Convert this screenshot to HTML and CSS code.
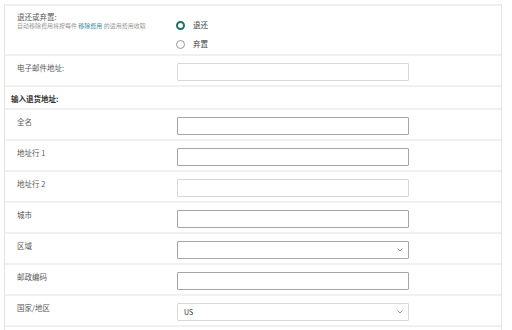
FILE: index.html
```html
<!DOCTYPE html>
<html lang="zh-CN">
<head>
  <meta charset="UTF-8" />
  <title>退货设置</title>
  <link rel="stylesheet" href="styles.css">
</head>
<body>
  <div class="form-table">
    <!-- 退还或弃置 -->
    <div class="row row-choice">
      <div class="row-label">
        <div class="label-title">退还或弃置:</div>
        <div class="label-hint">自动移除费用将按每件 <a href="#" class="hint-link">移除费用</a> 的适用费用收取</div>
      </div>
      <div class="radio-group">
        <label class="radio-item"><span class="radio-dot checked"></span>退还</label>
        <label class="radio-item"><span class="radio-dot"></span>弃置</label>
      </div>
    </div>

    <!-- 电子邮件 -->
    <div class="row">
      <div class="row-label">电子邮件地址:</div>
      <div class="row-field"><input type="text" class="text-input light"></div>
    </div>

    <!-- 退货地址 -->
    <div class="row row-section">
      <div class="section-title">输入退货地址:</div>
    </div>

    <div class="row">
      <div class="row-label">全名</div>
      <div class="row-field"><input type="text" class="text-input"></div>
    </div>
    <div class="row">
      <div class="row-label">地址行 1</div>
      <div class="row-field"><input type="text" class="text-input"></div>
    </div>
    <div class="row">
      <div class="row-label">地址行 2</div>
      <div class="row-field"><input type="text" class="text-input light"></div>
    </div>
    <div class="row">
      <div class="row-label">城市</div>
      <div class="row-field"><input type="text" class="text-input"></div>
    </div>
    <div class="row">
      <div class="row-label">区域</div>
      <div class="row-field">
        <div class="select-box">
          <span class="select-value"></span>
          <svg class="chevron" width="6" height="4" viewBox="0 0 6 4"><path d="M0.5 0.5 L3 3 L5.5 0.5" fill="none" stroke="#888" stroke-width="0.9"/></svg>
        </div>
      </div>
    </div>
    <div class="row">
      <div class="row-label">邮政编码</div>
      <div class="row-field"><input type="text" class="text-input"></div>
    </div>
    <div class="row">
      <div class="row-label">国家/地区</div>
      <div class="row-field">
        <div class="select-box light">
          <span class="select-value">US</span>
          <svg class="chevron" width="6" height="4" viewBox="0 0 6 4"><path d="M0.5 0.5 L3 3 L5.5 0.5" fill="none" stroke="#888" stroke-width="0.9"/></svg>
        </div>
      </div>
    </div>
  </div>
</body>
</html>
```

FILE: styles.css
```css
/* Basic reset */
* {
  margin: 0;
  padding: 0;
  box-sizing: border-box;
}
body {
  font-family: "Noto Sans CJK SC", "Noto Sans", sans-serif;
  background-color: #fff;
  color: #5a5a5a;
  height: 330px;
  overflow: hidden;
}
/* Table-like frame */
.form-table {
  margin: 4px 0 0 4px;
  width: 498px;
  min-height: 326px;
  border-top: 2px solid #eee;
  border-left: 1px solid #e4e4e4;
  border-right: 1px solid #e4e4e4;
}
.row {
  display: flex;
  height: 31px;
  border-bottom: 2px solid #f0f0f0;
}
.row-label {
  width: 172px;
  flex-shrink: 0;
  padding: 7px 0 0 12px;
  font-size: 7.5px;
  line-height: 10px;
}
.row-field {
  padding-top: 7px;
}
/* First row with radios */
.row-choice {
  height: 50px;
}
.row-choice .row-label {
  padding-top: 6px;
}
.label-title {
  font-size: 7.5px;
  line-height: 10px;
}
.label-hint {
  font-size: 6px;
  line-height: 8px;
  color: #9a9a9a;
  white-space: nowrap;
}
.hint-link {
  color: #3d8d9c;
  text-decoration: none;
}
.radio-group {
  display: flex;
  flex-direction: column;
  gap: 9px;
  padding: 14px 0 0 0;
  margin-left: -1px;
}
.radio-item {
  display: flex;
  align-items: center;
  gap: 8px;
  font-size: 7.5px;
  line-height: 10px;
  color: #444;
}
.radio-dot {
  width: 9px;
  height: 9px;
  border-radius: 50%;
  border: 1px solid #999;
  background-color: #fff;
}
.radio-dot.checked {
  border: 2.5px solid #1f6f62;
}
/* Section heading */
.row-section {
  height: 23px;
}
.section-title {
  padding: 7px 0 0 6px;
  font-size: 7.5px;
  line-height: 10px;
  font-weight: bold;
  color: #333;
}
/* Inputs */
.text-input,
.select-box {
  display: block;
  width: 232px;
  height: 18px;
  border: 1px solid #aaa4a4;
  border-radius: 1px;
  background-color: #fff;
  font-family: inherit;
}
.text-input.light,
.select-box.light {
  border-color: #d8d8d8;
}
.select-box {
  display: flex;
  align-items: center;
  justify-content: space-between;
  padding: 0 5px 0 6px;
  font-size: 7px;
  color: #333;
}
.chevron {
  display: block;
}
```
